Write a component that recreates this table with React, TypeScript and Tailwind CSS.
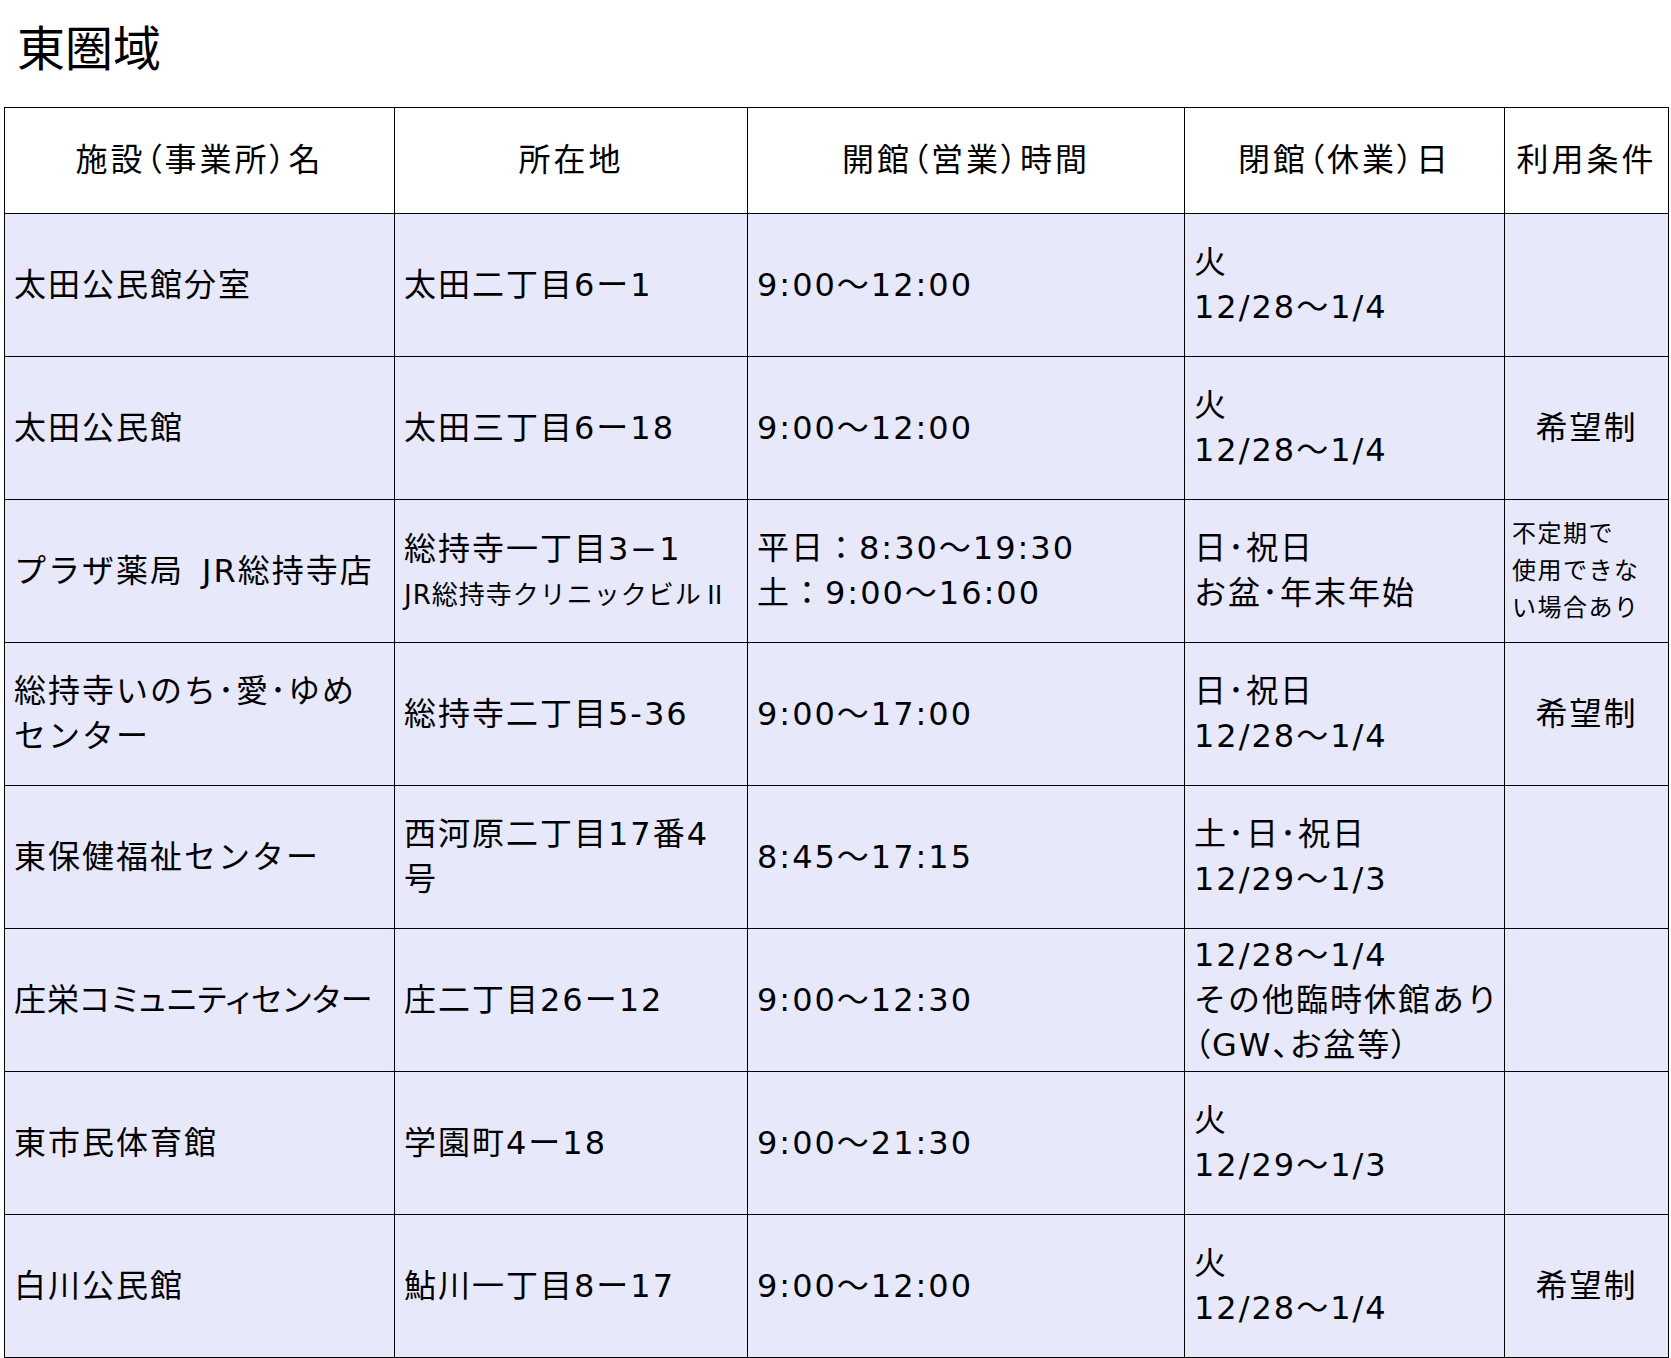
import { FC, ReactNode } from "react";

type Row = {
  name: ReactNode;
  address: ReactNode;
  hours: ReactNode;
  closed: ReactNode;
  terms?: ReactNode;
  termsSmall?: boolean;
};

const rows: Row[] = [
  {
    name: "太田公民館分室",
    address: "太田二丁目6ー1",
    hours: "9:00～12:00",
    closed: (
      <>
        火<br />
        12/28～1/4
      </>
    ),
  },
  {
    name: "太田公民館",
    address: "太田三丁目6ー18",
    hours: "9:00～12:00",
    closed: (
      <>
        火<br />
        12/28～1/4
      </>
    ),
    terms: "希望制",
  },
  {
    name: "プラザ薬局\u2002JR総持寺店",
    address: (
      <>
        <div>総持寺一丁目3−1</div>
        <div className="whitespace-nowrap text-[26px] leading-[42px] tracking-[1px]">
          JR総持寺クリニックビル
          <span className="font-['Noto_Sans_CJK_JP',sans-serif] [font-feature-settings:'fwid']">Ⅱ</span>
        </div>
      </>
    ),
    hours: (
      <>
        平日：8:30～19:30
        <br />
        土：9:00～16:00
      </>
    ),
    closed: (
      <>
        日･祝日
        <br />
        お盆･年末年始
      </>
    ),
    terms: (
      <>
        不定期で
        <br />
        使用できな
        <br />
        い場合あり
      </>
    ),
    termsSmall: true,
  },
  {
    name: (
      <>
        総持寺いのち･愛･ゆめ
        <br />
        センター
      </>
    ),
    address: "総持寺二丁目5-36",
    hours: "9:00～17:00",
    closed: (
      <>
        日･祝日
        <br />
        12/28～1/4
      </>
    ),
    terms: "希望制",
  },
  {
    name: "東保健福祉センター",
    address: (
      <>
        西河原二丁目17番4
        <br />号
      </>
    ),
    hours: "8:45～17:15",
    closed: (
      <>
        土･日･祝日
        <br />
        12/29～1/3
      </>
    ),
  },
  {
    name: (
      <span className="whitespace-nowrap tracking-[1px] [font-feature-settings:'palt']">
        庄栄コミュニティセンター
      </span>
    ),
    address: "庄二丁目26ー12",
    hours: "9:00～12:30",
    closed: (
      <>
        12/28～1/4
        <br />
        その他臨時休館あり
        <br />
        <span className="[font-feature-settings:'palt']">（GW、お盆等）</span>
      </>
    ),
  },
  {
    name: "東市民体育館",
    address: "学園町4ー18",
    hours: "9:00～21:30",
    closed: (
      <>
        火<br />
        12/29～1/3
      </>
    ),
  },
  {
    name: "白川公民館",
    address: "鮎川一丁目8ー17",
    hours: "9:00～12:00",
    closed: (
      <>
        火<br />
        12/28～1/4
      </>
    ),
    terms: "希望制",
  },
];

const headers = ["施設（事業所）名", "所在地", "開館（営業）時間", "閉館（休業）日", "利用条件"];

const cell = "border border-black align-middle pl-[9px] pr-[4px] text-left";

const TableRow: FC<{ row: Row }> = ({ row }) => (
  <tr className="h-[143px] bg-[#e8e8fb]">
    <td className={cell}>{row.name}</td>
    <td className={cell}>{row.address}</td>
    <td className={cell}>{row.hours}</td>
    <td className={cell}>{row.closed}</td>
    {row.termsSmall ? (
      <td className="border border-black align-middle pl-[7px] pr-[2px] text-left text-[24px] leading-[37px] tracking-[1.5px]">
        {row.terms}
      </td>
    ) : (
      <td className="border border-black align-middle text-center">{row.terms}</td>
    )}
  </tr>
);

export default function App() {
  return (
    <div className="min-h-screen bg-white text-black font-['DejaVu_Sans','Noto_Sans_CJK_JP',sans-serif]">
      <h1 className="pl-[17px] pt-[12px] text-[48px] leading-[67px] font-normal font-['Noto_Sans_CJK_JP',sans-serif]">
        東圏域
      </h1>
      <div className="mt-[28px] px-[4px]">
        <table className="w-[1664px] table-fixed border-collapse text-[32px] leading-[45px] tracking-[2px]">
          <colgroup>
            <col className="w-[390px]" />
            <col className="w-[353px]" />
            <col className="w-[437px]" />
            <col className="w-[320px]" />
            <col className="w-[164px]" />
          </colgroup>
          <thead>
            <tr className="h-[106px] bg-white">
              {headers.map((h) => (
                <th
                  key={h}
                  className="border border-black align-middle text-center font-normal tracking-[3px] [font-feature-settings:'palt']"
                >
                  {h}
                </th>
              ))}
            </tr>
          </thead>
          <tbody>
            {rows.map((row, idx) => (
              <TableRow key={idx} row={row} />
            ))}
          </tbody>
        </table>
      </div>
    </div>
  );
}
